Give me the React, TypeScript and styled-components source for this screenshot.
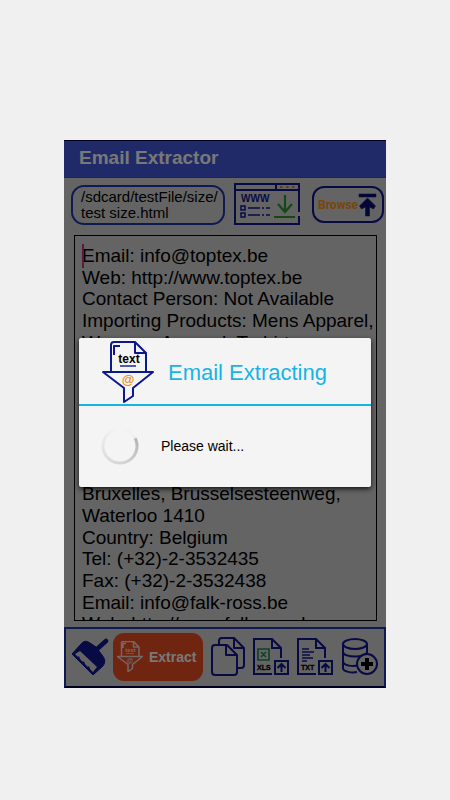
import React from "react";
import styled, { createGlobalStyle } from "styled-components";

const navy = "#101488";
const frame = "#2034a4";

const GlobalStyle = createGlobalStyle`
  * { box-sizing: border-box; }
  body {
    margin: 0;
    background: #f0f0f0;
    font-family: "Liberation Sans", Arial, sans-serif;
    color: #000;
  }
  button, textarea { font: inherit; }
`;

const Page = styled.div`
  min-height: 100vh;
  padding: 140px 64px 112px;
  display: flex;
`;

const Screen = styled.div`
  position: relative;
  flex: 1;
  min-width: 0;
  display: flex;
  flex-direction: column;
  background: #c8c8c8;
`;

const TitleBar = styled.header`
  display: flex;
  align-items: center;
  height: 38px;
  padding: 0 15px 3px;
  border-top: 1px solid #000040;
  border-bottom: 1px solid #3c4c98;
  background: #4054d0;
`;

const AppTitle = styled.h1`
  margin: 0;
  font-size: 19px;
  line-height: 22px;
  color: #f0f0f0;
`;

const SourceBar = styled.div`
  display: flex;
  align-items: center;
  gap: 9px;
  height: 57px;
  padding: 0 2px 4px 7px;
`;

const PathField = styled.textarea`
  width: 154px;
  height: 40px;
  padding: 2px 0 2px 8px;
  border: 2px solid ${frame};
  border-radius: 13px;
  background: transparent;
  font-size: 15px;
  line-height: 16px;
  white-space: pre;
  resize: none;
  overflow: hidden;
`;

const IconButton = styled.button`
  display: flex;
  padding: 0;
  border: 0;
  background: none;
`;

const BrowseButton = styled.button`
  display: flex;
  margin-left: auto;
  padding: 0;
  border: 0;
  background: none;
`;

const Editor = styled.div`
  position: relative;
  flex: 1;
  margin: 0 9px 6px 10px;
  border: 1px solid #000;
  display: flex;
`;

const EditorText = styled.textarea`
  flex: 1;
  min-width: 0;
  padding: 9px 0 0 7px;
  border: 0;
  background: transparent;
  font-size: 19px;
  line-height: 1.14;
  white-space: pre;
  resize: none;
  overflow: hidden;
`;

const Caret = styled.span`
  position: absolute;
  left: 7px;
  top: 8px;
  width: 2px;
  height: 24px;
  background: #c03070;
`;

const ActionBar = styled.nav`
  display: flex;
  align-items: center;
  justify-content: space-between;
  height: 61px;
  padding: 0 6px 2px 5px;
  border: 2px solid ${frame};
  border-bottom-color: #000040;
`;

const ActionGroup = styled.div<{ $gap: number }>`
  display: flex;
  align-items: center;
  gap: ${(p) => p.$gap}px;
`;

const ExtractButton = styled.button`
  display: flex;
  align-items: center;
  gap: 6px;
  width: 90px;
  height: 48px;
  padding: 0 4px;
  border: 0;
  border-radius: 11px;
  background: #e04a20;
  color: #f0f0f0;
  font-size: 14px;
  font-weight: bold;
`;

const Scrim = styled.div`
  position: absolute;
  inset: 0;
  display: grid;
  align-items: center;
  padding: 0 15px 4px;
  background: rgba(0, 0, 0, 0.5);
`;

const Dialog = styled.section`
  border-radius: 2px;
  background: #f4f4f4;
  box-shadow: 0 2px 5px rgba(0, 0, 0, 0.8);
`;

const DialogHeader = styled.header`
  display: flex;
  align-items: center;
  gap: 14px;
  height: 68px;
  padding: 2px 23px 0;
  border-bottom: 2px solid #16b4e6;
`;

const DialogTitle = styled.h2`
  margin: 0;
  padding-top: 2px;
  font-size: 22px;
  line-height: 26px;
  font-weight: normal;
  color: #16b4e6;
`;

const DialogBody = styled.div`
  display: flex;
  align-items: center;
  gap: 20px;
  height: 81px;
  padding: 0 20px;
`;

const Message = styled.p`
  margin: 0;
  font-size: 14px;
  line-height: 18px;
`;

const Spinner = styled.div`
  width: 42px;
  height: 42px;
  border-radius: 50%;
  background: conic-gradient(#f4f4f4 0deg, #f0f0f0 60deg, #b4b4b4 66deg, #d0d0d0 150deg, #dedede 230deg, #f0f0f0 330deg, #f4f4f4 360deg);
  mask: radial-gradient(circle, transparent 15px, #000 16px, #000 18px, transparent 19px);
`;

const SvgText = styled.text<{ $size: number }>`
  font-family: "Liberation Sans", Arial, sans-serif;
  font-weight: bold;
  font-size: ${(p) => p.$size}px;
`;

type FunnelProps = {
  width: number;
  height: number;
  line: string;
  label: string;
  at: string;
  stroke: number;
};

function FunnelIcon({ width, height, line, label, at, stroke }: FunnelProps) {
  return (
    <svg width={width} height={height} viewBox="0 0 52 62" fill="none" stroke={line} strokeWidth={stroke} strokeLinejoin="round" aria-hidden="true">
      <path d="M9 31V4q0-3 3-3h21l11 11v19M33 1v11h11M12 14V5h6" />
      <path d="M1 31h50L31 47v8l-9 6V47Z" />
      <path d="M18 25h16" strokeWidth={1.4} />
      <SvgText $size={12} x="27" y="22" textAnchor="middle" fill={label} stroke="none">text</SvgText>
      <SvgText $size={13} x="26" y="43" textAnchor="middle" fill={at} stroke="none">@</SvgText>
    </svg>
  );
}

function WebIcon() {
  return (
    <svg width="66" height="43" viewBox="0 0 66 43" fill="none" stroke={navy} strokeWidth="2" aria-hidden="true">
      <path d="M65 29V1H1v40h64v-8M1 7h64M42 1v6" />
      <path d="M46 4h2.500m3.500 0h2.500m3.500 0h2.500" stroke="#d07820" />
      <SvgText $size={10} x="7" y="19" fill={navy} stroke="none">WWW</SvgText>
      <path d="M7 23h4v4H7zM7 30h4v4H7zM14 25h12m2 0h2m2 0h4M14 32h12m2 0h2m2 0h4" strokeWidth="1.500" />
      <path d="M51 12v17m-7-8 7 8 7-8M40 34h21" stroke="#28902c" strokeWidth="2.200" />
    </svg>
  );
}

function BrowseIcon() {
  return (
    <svg width="72" height="37" viewBox="0 0 72 37" aria-hidden="true">
      <rect x="1" y="1" width="70" height="35" rx="11" fill="none" stroke={navy} strokeWidth="2" />
      <path d="M47 8h17v3H47zM55.500 12l8 8-2 3-4-2v9h-4v-9l-4 2-2-3Z" fill="#080c70" stroke="#080c70" strokeWidth="0.500" />
    </svg>
  );
}

const BrowseFace = styled.span`
  display: grid;
  align-items: center;
  > * { grid-area: 1 / 1; }
`;

const BrowseLabel = styled.span`
  padding-left: 6px;
  font-family: Roboto, "Liberation Sans", sans-serif;
  font-size: 12px;
  line-height: 18px;
  font-weight: bold;
  text-align: left;
  color: #f08c14;
`;

function BroomIcon() {
  return (
    <svg width="38" height="38" viewBox="0 0 38 38" fill={navy} aria-hidden="true">
      <path d="M35 3 25 12" stroke={navy} strokeWidth="4.500" strokeLinecap="round" />
      <path d="M1 16 10 6q4-5 9-1l6 4 6 8q5 6 1 11L22 37Z" stroke={navy} strokeWidth="1" strokeLinejoin="round" />
      <path d="m9 13 17 16-4 5-3-3-1-3-1 1-3-3-1-3-1 1-3-3-1-3-1 1-3-3Z" fill="#c8c8c8" />
    </svg>
  );
}

function CopyIcon() {
  return (
    <svg width="34" height="39" viewBox="0 0 34 39" fill="none" stroke={navy} strokeWidth="2" strokeLinejoin="round" aria-hidden="true">
      <path d="M8 8V4q0-3 3-3h12l10 10v17q0 3-3 3h-4M23 1v10h10" />
      <path d="M1 11q0-3 3-3h12l10 10v17q0 3-3 3H4q-3 0-3-3ZM15 8v10h11" />
    </svg>
  );
}

function FileIcon({ kind }: { kind: "XLS" | "TXT" }) {
  return (
    <svg width="36" height="38" viewBox="0 0 36 38" fill="none" stroke={navy} strokeWidth="2" aria-hidden="true">
      <path d="M19 36H1V1h18l9 9v10M19 1v9h9" />
      <path d="M22 23h13v13H22zM28.500 34v-8m-4 4 4-4 4 4" />
      {kind === "XLS" ? (
        <path d="M5 11h11v11H5zM8 14l5 5m0-5-5 5" stroke="#208050" strokeWidth="1.600" />
      ) : (
        <path d="M5 11h7M5 14h12M5 17h8M5 20h11M5 23h5" strokeWidth="1.500" />
      )}
      <SvgText $size={7} x="4" y="32" fill="#000" stroke="#000" strokeWidth="0.300">{kind}</SvgText>
    </svg>
  );
}

function DatabaseIcon() {
  return (
    <svg width="37" height="38" viewBox="0 0 37 38" fill="none" stroke={navy} strokeWidth="2" aria-hidden="true">
      <ellipse cx="14" cy="6" rx="12" ry="5" />
      <path d="M2 6v8c0 6 24 6 24 0V6M2 14v9c0 5 11 6 15 4M26 14v3M2 23v7c0 4 9 5 14 4" />
      <circle cx="26" cy="26" r="10" fill="#c8c8c8" />
      <path d="M26 20v12m-6-6h12" stroke="#000" strokeWidth="4" />
    </svg>
  );
}

const extractedText = [
  "Email: info@toptex.be",
  "Web: http://www.toptex.be",
  "Contact Person: Not Available",
  "Importing Products: Mens Apparel,",
  "Womens Apparel, T-shirts",
  "",
  "",
  "",
  "",
  "",
  "",
  "Bruxelles, Brusselsesteenweg,",
  "Waterloo 1410",
  "Country: Belgium",
  "Tel: (+32)-2-3532435",
  "Fax: (+32)-2-3532438",
  "Email: info@falk-ross.be",
  "Web: http://www.falk-ross.be",
].join("\n");

export default function App() {
  return (
    <>
      <GlobalStyle />
      <Page>
        <Screen>
          <TitleBar>
            <AppTitle>Email Extractor</AppTitle>
          </TitleBar>
          <SourceBar>
            <PathField aria-label="File path" defaultValue={"/sdcard/testFile/size/\ntest size.html"} />
            <IconButton aria-label="Load from web"><WebIcon /></IconButton>
            <BrowseButton>
              <BrowseFace>
                <BrowseIcon />
                <BrowseLabel>Browse</BrowseLabel>
              </BrowseFace>
            </BrowseButton>
          </SourceBar>
          <Editor>
            <EditorText aria-label="Source text" defaultValue={extractedText} />
            <Caret />
          </Editor>
          <ActionBar>
            <ActionGroup $gap={4}>
              <IconButton aria-label="Clear"><BroomIcon /></IconButton>
              <ExtractButton>
                <FunnelIcon width={26} height={31} line="#e8d0c8" label="#e8d0c8" at="#e8d0c8" stroke={3} />
                Extract
              </ExtractButton>
            </ActionGroup>
            <ActionGroup $gap={8}>
              <IconButton aria-label="Copy"><CopyIcon /></IconButton>
              <IconButton aria-label="Export XLS"><FileIcon kind="XLS" /></IconButton>
              <IconButton aria-label="Export TXT"><FileIcon kind="TXT" /></IconButton>
              <IconButton aria-label="Save to database"><DatabaseIcon /></IconButton>
            </ActionGroup>
          </ActionBar>
          <Scrim>
            <Dialog role="dialog" aria-labelledby="dialog-title">
              <DialogHeader>
                <FunnelIcon width={52} height={62} line="#0c1890" label="#000" at="#f08a1c" stroke={2} />
                <DialogTitle id="dialog-title">Email Extracting</DialogTitle>
              </DialogHeader>
              <DialogBody>
                <Spinner role="progressbar" aria-label="Extracting" />
                <Message>Please wait...</Message>
              </DialogBody>
            </Dialog>
          </Scrim>
        </Screen>
      </Page>
    </>
  );
}
